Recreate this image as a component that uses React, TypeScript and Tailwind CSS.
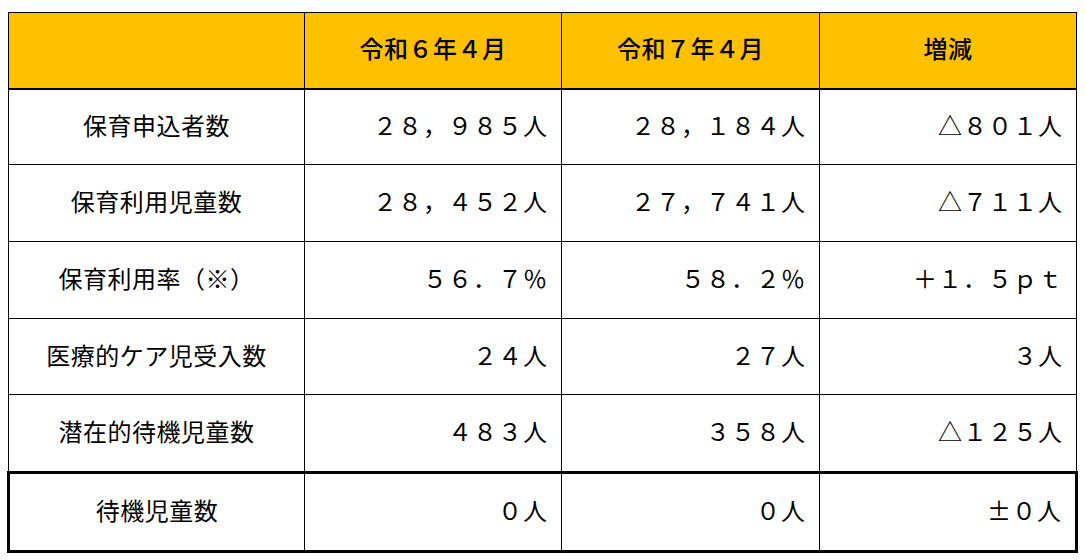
const rows = [
  { label: '保育申込者数', a: '２８，９８５人', b: '２８，１８４人', diff: '△８０１人', h: 'h-[76px]' },
  { label: '保育利用児童数', a: '２８，４５２人', b: '２７，７４１人', diff: '△７１１人', h: 'h-[77px]' },
  { label: '保育利用率（※）', a: '５６．７％', b: '５８．２％', diff: '＋１．５ｐｔ', h: 'h-[77px]' },
  { label: '医療的ケア児受入数', a: '２４人', b: '２７人', diff: '３人', h: 'h-[76px]' },
  { label: '潜在的待機児童数', a: '４８３人', b: '３５８人', diff: '△１２５人', h: 'h-[78px]' },
];

const App = () => {
  return (
    <div
      className="bg-white w-[1086px] h-[560px] pt-[12px] pl-[7px] text-black"
      style={{ fontFamily: '"Noto Sans CJK JP", "Noto Sans", sans-serif' }}
    >
      <table className="table-fixed border-collapse w-[1068px] text-[24px] tracking-[1px]">
        <colgroup>
          <col className="w-[296px]" />
          <col className="w-[257px]" />
          <col className="w-[258px]" />
          <col className="w-[257px]" />
        </colgroup>
        <thead>
          <tr className="h-[76px] bg-[#ffc000]">
            <th className="border border-black border-b-2"></th>
            <th className="border border-black border-b-2 font-medium tracking-[0.5px] pb-[4px]">令和６年４月</th>
            <th className="border border-black border-b-2 font-medium tracking-[0.5px] pb-[4px]">令和７年４月</th>
            <th className="border border-black border-b-2 font-medium tracking-[0.5px] pb-[4px]">増減</th>
          </tr>
        </thead>
        <tbody>
          {rows.map((r) => (
            <tr key={r.label} className={r.h}>
              <td className="border border-black text-center pb-[4px] tracking-[0.5px]">{r.label}</td>
              <td className="border border-black text-right pr-[13px] pb-[4px]">{r.a}</td>
              <td className="border border-black text-right pr-[13px] pb-[4px]">{r.b}</td>
              <td className="border border-black text-right pr-[13px] pb-[4px]">{r.diff}</td>
            </tr>
          ))}
          <tr className="h-[79px]">
            <td className="border border-black border-y-[3px] border-l-[3px] text-center pb-[4px] tracking-[0.5px]">待機児童数</td>
            <td className="border border-black border-y-[3px] text-right pr-[13px] pb-[4px]">０人</td>
            <td className="border border-black border-y-[3px] text-right pr-[13px] pb-[4px]">０人</td>
            <td className="border border-black border-y-[3px] border-r-[3px] text-right pr-[13px] pb-[4px]">±０人</td>
          </tr>
        </tbody>
      </table>
    </div>
  );
};

export default App;
